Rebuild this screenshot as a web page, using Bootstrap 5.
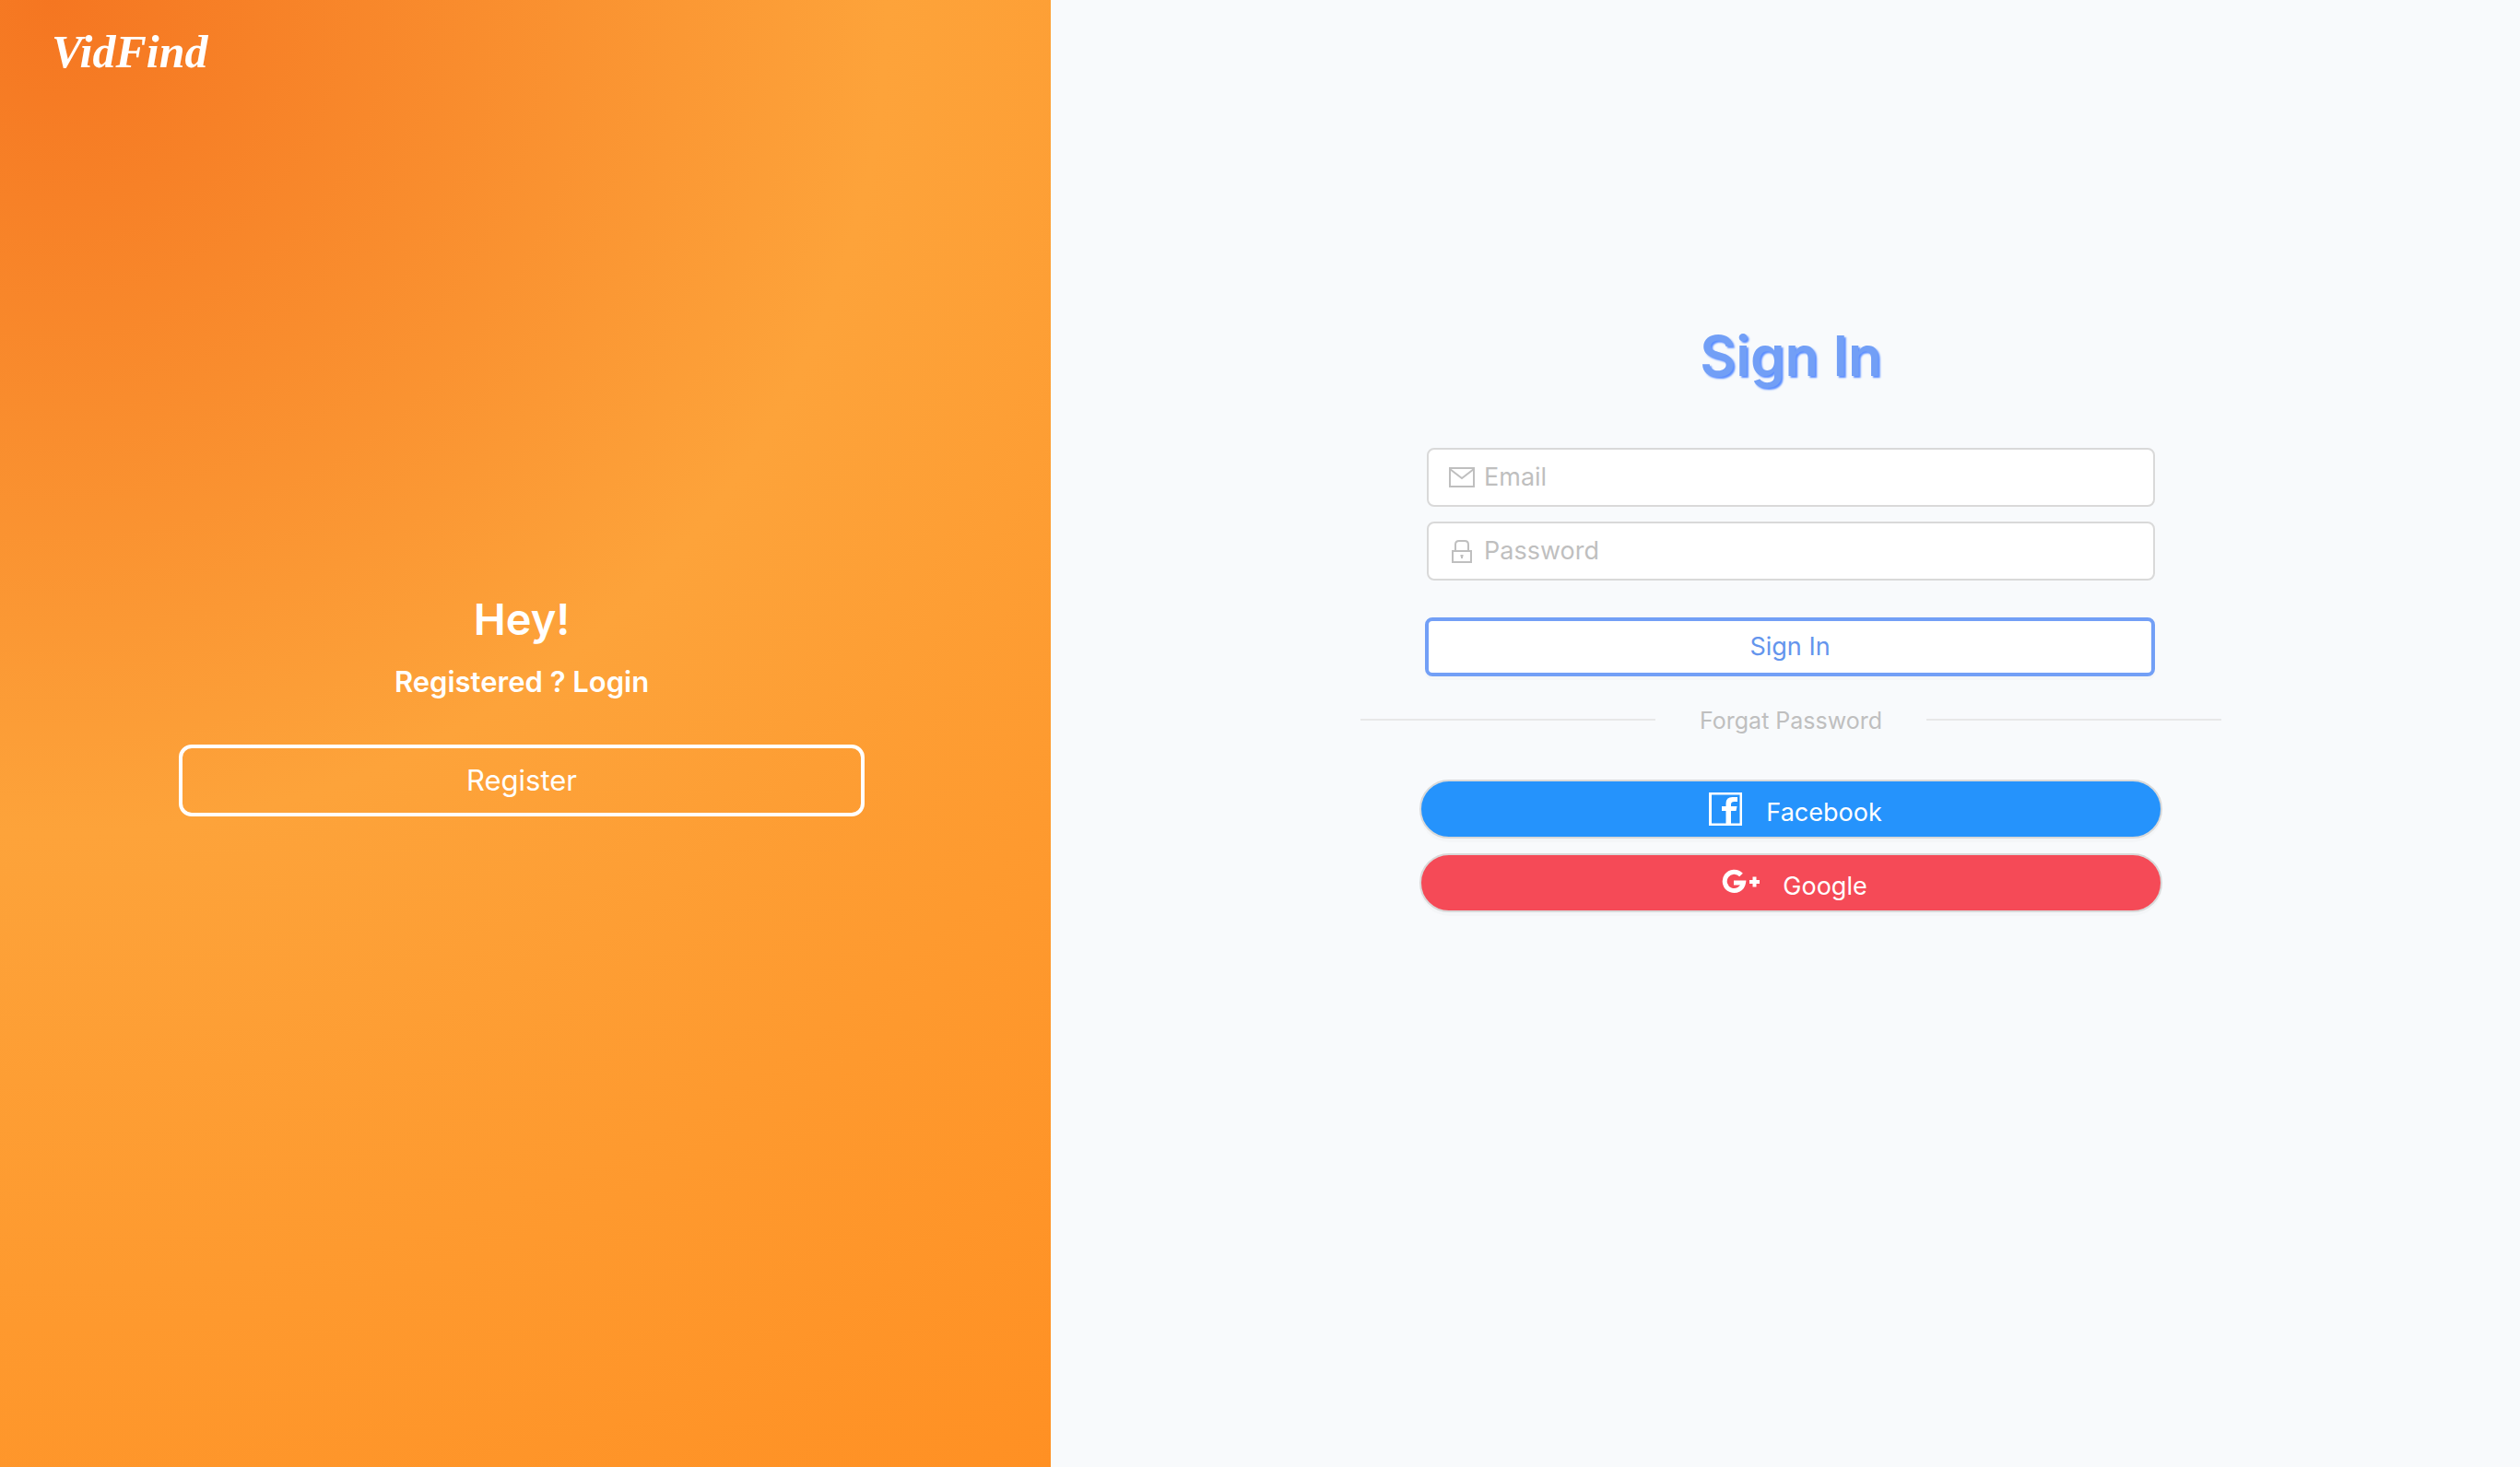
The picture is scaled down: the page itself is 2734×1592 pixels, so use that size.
<!DOCTYPE html>
<html lang="en">
<head>
<meta charset="utf-8">
<meta name="viewport" content="width=device-width, initial-scale=1">
<title>VidFind – Sign In</title>
<link href="https://cdn.jsdelivr.net/npm/bootstrap@5.3.0/dist/css/bootstrap.min.css" rel="stylesheet">
<style>
  body { font-family: Inter, "Liberation Sans", sans-serif; font-size: 27px; background: #f8fafc; }
  .promo { flex: 0 0 41.7%; background: radial-gradient(circle at 5% 0, #f57621 0%, #fda33a 47%, #ff9023 100%); padding: 20px 64px 0 56px; color: #fff; }
  .brand { font-family: "Liberation Serif", serif; font-style: italic; font-weight: 700; font-size: 50px; line-height: 72px; }
  .promo-body { width: 744px; max-width: 100%; margin-top: 548px; }
  .promo-hey { font-size: 47px; line-height: 64px; font-weight: 600; margin: 0 0 16px; }
  .promo-sub { font-size: 31px; line-height: 40px; font-weight: 600; margin: 0 0 48px; }
  .btn-register { --bs-btn-color: #fff; --bs-btn-border-color: #fff; --bs-btn-font-size: 31px; --bs-btn-line-height: 40px; --bs-btn-border-width: 4px; --bs-btn-border-radius: 14px; --bs-btn-padding-y: 15px; }
  .signin { padding: 344px 0 0 12px; }
  .signin-title { font-size: 60px; line-height: 84px; font-weight: 600; color: #729ff6; text-shadow: 2px 2px 2px #5a8dff; margin: 0 0 58px; }
  .signin-form { width: 790px; max-width: 100%; }
  .field { height: 64px; background: #fff; border: 2px solid #d9d9d9; border-radius: 8px; padding: 0 20px; gap: 8px; margin-bottom: 16px; }
  .field svg { width: 32px; height: 32px; flex: none; }
  .field input { box-shadow: none !important; font-size: 27px; line-height: 40px; }
  .field input::placeholder { color: #bfbfbf; }
  .btn-signin { --bs-btn-color: #6495ed; --bs-btn-bg: #fff; --bs-btn-border-color: #729ff6; --bs-btn-border-width: 4px; --bs-btn-border-radius: 8px; --bs-btn-font-size: 27px; --bs-btn-line-height: 40px; --bs-btn-padding-y: 8px; margin: 24px 0 0 -2px; box-shadow: 0 4px 0 rgba(0,0,0,.016); }
  .divide { width: 934px; max-width: 100%; gap: 48px; margin: 26px 0 42px; font-size: 25px; line-height: 44px; }
  .divide a { color: #bfbfbf; }
  .divide span { height: 2px; background: #e8e8e8; margin-bottom: 2px; }
  .social { width: 806px; max-width: 100%; gap: 16px; }
  .btn-social { --bs-btn-color: #fff; --bs-btn-border-color: #d9d9d9; --bs-btn-border-width: 2px; --bs-btn-border-radius: 32px; --bs-btn-font-size: 27px; --bs-btn-line-height: 40px; --bs-btn-padding-y: 0; height: 64px; padding-left: 20px; box-shadow: 0 4px 0 rgba(0,0,0,.016); gap: 24px; }
  .btn-fb { --bs-btn-bg: #2593fc; }
  .btn-gg { --bs-btn-bg: #f54a57; }
  .btn-social span { padding-top: 8px; }
</style>
<script src="https://cdn.jsdelivr.net/npm/bootstrap@5.3.0/dist/js/bootstrap.bundle.min.js"></script>
</head>
<body>
<div class="container-fluid p-0">
  <div class="d-flex min-vh-100">
    <aside class="promo d-flex flex-column">
      <a class="brand text-white text-decoration-none align-self-start" href="#">VidFind</a>
      <div class="promo-body text-center align-self-center">
        <h2 class="promo-hey">Hey!</h2>
        <h4 class="promo-sub">Registered ? Login</h4>
        <button type="button" class="btn btn-outline-light btn-register w-100">Register</button>
      </div>
    </aside>
    <main class="signin flex-fill d-flex flex-column align-items-center">
      <h1 class="signin-title">Sign In</h1>
      <form class="signin-form d-flex flex-column">
        <div class="field d-flex align-items-center">
          <svg viewBox="0 0 32 32" fill="none" stroke="#bfbfbf" stroke-width="2" aria-hidden="true"><path d="M3 6h26v20H3zM3 7l13 10L29 7"/></svg>
          <input class="form-control border-0 p-0 bg-transparent" type="email" placeholder="Email" aria-label="Email">
        </div>
        <div class="field d-flex align-items-center">
          <svg viewBox="0 0 32 32" fill="none" stroke="#bfbfbf" stroke-width="2" aria-hidden="true"><path d="M6 16h20v12H6zM9 16V9q0-4 4-4h6q4 0 4 4v7"/><path d="M16 24v-4M14.500 21h3"/></svg>
          <input class="form-control border-0 p-0 bg-transparent" type="password" placeholder="Password" aria-label="Password">
        </div>
        <button type="submit" class="btn btn-signin">Sign In</button>
      </form>
      <div class="divide d-flex align-items-center">
        <span class="flex-fill"></span><a class="text-decoration-none" href="#">Forgat Password</a><span class="flex-fill"></span>
      </div>
      <div class="social d-flex flex-column">
        <button type="button" class="btn btn-social btn-fb d-flex align-items-center justify-content-center">
          <svg width="40" height="40" viewBox="0 0 40 40" aria-hidden="true"><path fill="#fff" fill-rule="evenodd" d="M2 2h36v36H2zM5 4.500v31h15.500V22H16v-5h4.500v-3q0-7 7-7H33v5h-3.500q-3.500 0-3.500 3v2h6.500l-1 5H26v13.500h9.500v-31z"/></svg>
          <span>Facebook</span>
        </button>
        <button type="button" class="btn btn-social btn-gg d-flex align-items-center justify-content-center">
          <svg width="42" height="40" viewBox="0 0 42 40" aria-hidden="true"><path fill="none" stroke="#fff" stroke-width="5" d="M21 11.500A10.200 10.200 0 1 0 23.500 20H13"/><path stroke="#fff" stroke-width="4" d="M30 19h11M35.500 13.500v11"/></svg>
          <span>Google</span>
        </button>
      </div>
    </main>
  </div>
</div>
</body>
</html>
